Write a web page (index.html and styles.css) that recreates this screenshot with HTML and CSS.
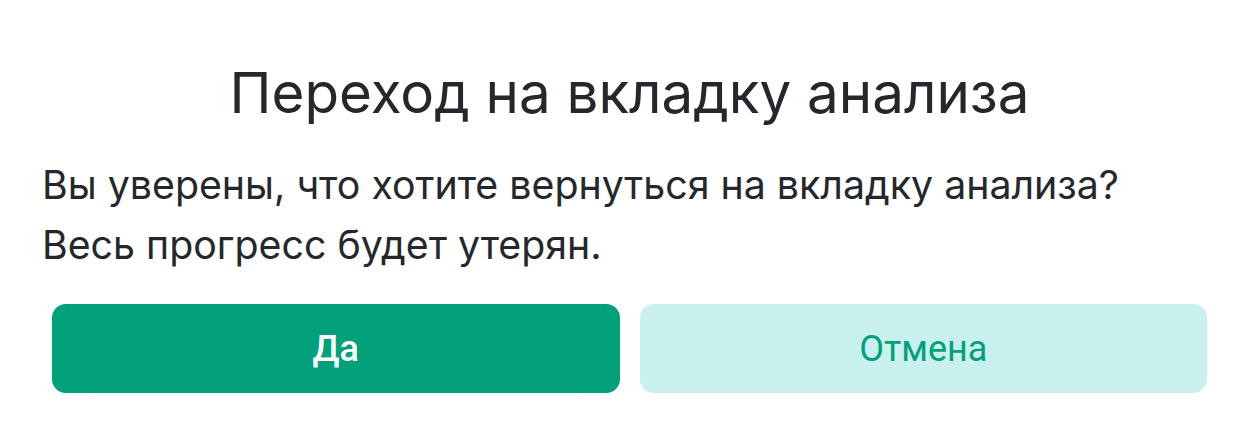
FILE: index.html
```html
<!DOCTYPE html>
<html lang="ru">
<head>
<meta charset="utf-8">
<link rel="stylesheet" href="styles.css">
</head>
<body>
<div class="dialog">
  <h1 class="title">Переход на вкладку анализа</h1>
  <p class="text">Вы уверены, что хотите вернуться на вкладку анализа?<br>Весь прогресс будет утерян.</p>
  <div class="actions">
    <button class="btn btn-primary">Да</button>
    <button class="btn btn-secondary">Отмена</button>
  </div>
</div>
</body>
</html>
```
FILE: styles.css
```css
html, body {
  margin: 0;
  padding: 0;
  background: #ffffff;
}
.dialog {
  width: 1259px;
  height: 437px;
  box-sizing: border-box;
  padding: 61px 52px 0 42px;
  font-family: Inter, "Noto Sans", sans-serif;
  color: #24272b;
}
.title {
  margin: 0;
  text-align: center;
  font-size: 56.5px;
  font-weight: 400;
  line-height: 64px;
  padding-left: 10px;
}
.text {
  margin: 30px 0 0 0;
  font-size: 39.3px;
  font-weight: 400;
  line-height: 60px;
}
.actions {
  margin: 29px 0 0 10px;
  display: flex;
  gap: 20px;
}
.btn {
  flex: 1;
  height: 89px;
  border: none;
  border-radius: 14px;
  font-family: Roboto, "Liberation Sans", sans-serif;
  font-size: 36px;
}
.btn-primary {
  background: #00a07a;
  color: #ffffff;
  font-weight: 500;
}
.btn-secondary {
  background: #c8f0ec;
  color: #00a07a;
  font-weight: 400;
}
```
